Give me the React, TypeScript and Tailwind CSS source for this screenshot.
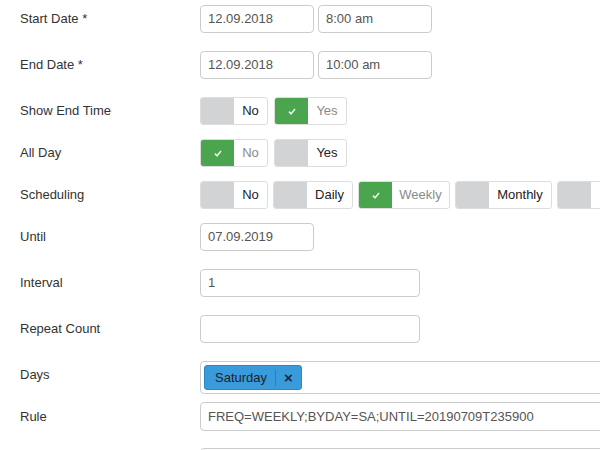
const font = { fontFamily: '"Liberation Sans", Arial, sans-serif' };

function Label({ children, top }: { children: React.ReactNode; top?: boolean }) {
  return (
    <div className={`w-[200px] shrink-0 pl-[20px] text-[13px] text-[#333] ${top ? 'self-start pt-[4px]' : ''}`}>
      {children}
    </div>
  );
}

function Input({ value, w }: { value: string; w: string }) {
  return (
    <div className={`${w} h-[28px] shrink-0 rounded-[4px] border border-[#ccc] bg-white px-[7px] flex items-center text-[13px] text-[#555]`}>
      {value}
    </div>
  );
}

function Check() {
  return (
    <svg width="8" height="7" viewBox="0 0 9 8" className="text-[#e8f5e0]">
      <path d="M1 4.2 L3.4 6.6 L8 1.2" fill="none" stroke="currentColor" strokeWidth="1.8" />
    </svg>
  );
}

function Toggle({ text, on, w }: { text: string; on?: boolean; w: string }) {
  return (
    <div className="h-[28px] shrink-0 flex rounded-[3px] border border-[#ddd] bg-white overflow-hidden">
      <div className={`w-[33px] flex items-center justify-center ${on ? 'bg-[#4aa54e]' : 'bg-[#d2d3d5]'}`}>
        {on && <Check />}
      </div>
      <div className={`${w} flex items-center justify-center text-[13px] ${on ? 'text-[#8a8a8a]' : 'text-[#222]'}`}>
        {text}
      </div>
    </div>
  );
}

export default function App() {
  return (
    <div className="w-[600px] h-[450px] overflow-hidden bg-white pt-[5px]" style={font}>
      <div className="flex items-center h-[28px]">
        <Label>Start Date *</Label>
        <div className="flex gap-[4px]">
          <Input value="12.09.2018" w="w-[114px]" />
          <Input value="8:00 am" w="w-[114px]" />
        </div>
      </div>

      <div className="flex items-center h-[28px] mt-[18px]">
        <Label>End Date *</Label>
        <div className="flex gap-[4px]">
          <Input value="12.09.2018" w="w-[114px]" />
          <Input value="10:00 am" w="w-[114px]" />
        </div>
      </div>

      <div className="flex items-center h-[28px] mt-[18px]">
        <Label>Show End Time</Label>
        <div className="flex gap-[6px]">
          <Toggle text="No" w="w-[33px]" />
          <Toggle text="Yes" on w="w-[38px]" />
        </div>
      </div>

      <div className="flex items-center h-[28px] mt-[14px]">
        <Label>All Day</Label>
        <div className="flex gap-[6px]">
          <Toggle text="No" on w="w-[33px]" />
          <Toggle text="Yes" w="w-[38px]" />
        </div>
      </div>

      <div className="flex items-center h-[28px] mt-[14px]">
        <Label>Scheduling</Label>
        <div className="flex gap-[5px]">
          <Toggle text="No" w="w-[33px]" />
          <Toggle text="Daily" w="w-[45px]" />
          <Toggle text="Weekly" on w="w-[57px]" />
          <Toggle text="Monthly" w="w-[62px]" />
          <Toggle text="Yearly" w="w-[55px]" />
        </div>
      </div>

      <div className="flex items-center h-[28px] mt-[14px]">
        <Label>Until</Label>
        <Input value="07.09.2019" w="w-[114px]" />
      </div>

      <div className="flex items-center h-[28px] mt-[18px]">
        <Label>Interval</Label>
        <Input value="1" w="w-[220px]" />
      </div>

      <div className="flex items-center h-[28px] mt-[18px]">
        <Label>Repeat Count</Label>
        <Input value="" w="w-[220px]" />
      </div>

      <div className="flex h-[33px] mt-[18px]">
        <Label top>Days</Label>
        <div className="w-[420px] shrink-0 rounded-[4px] border border-[#ccc] bg-white pl-[3px] pt-[3px]">
          <div className="inline-flex h-[25px] items-center rounded-[3px] border border-[#2a87c8] bg-[#3a9bdc] text-[13px] text-[#222]">
            <span className="pl-[10px] pr-[8px]">Saturday</span>
            <span className="h-[16px] w-px bg-[#2a7fb8]" />
            <span className="px-[8px] text-[15px] font-bold leading-none text-[#1c2a36]">×</span>
          </div>
        </div>
      </div>

      <div className="flex items-center h-[29px] mt-[8px]">
        <Label>Rule</Label>
        <Input value="FREQ=WEEKLY;BYDAY=SA;UNTIL=20190709T235900" w="w-[420px] h-[29px]" />
      </div>

      <div className="flex mt-[17px]">
        <div className="w-[200px] shrink-0" />
        <div className="w-[420px] shrink-0 h-[30px] rounded-[4px] border border-[#ccc]" />
      </div>
    </div>
  );
}
